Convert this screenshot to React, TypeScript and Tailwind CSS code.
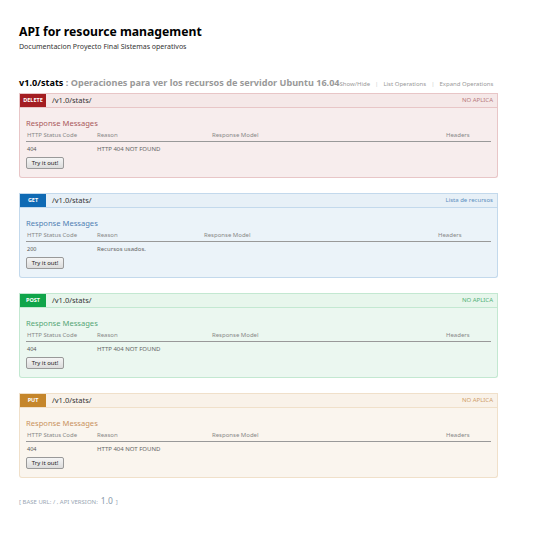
import React from "react";

type Op = {
  method: string;
  badge: string;
  head: string;
  content: string;
  h4: string;
  opt: string;
  summary: string;
  code: string;
  reason: string;
  reasonW: string;
  modelW: string;
};

const ops: Op[] = [
  {
    method: "DELETE",
    badge: "bg-[#a41e22]",
    head: "bg-[#f5e8e8] border-[#e8c6c7]",
    content: "bg-[#f7eded] border-[#e8c6c7]",
    h4: "text-[#a9595b]",
    opt: "text-[#b77a7c]",
    summary: "NO APLICA",
    code: "404",
    reason: "HTTP 404 NOT FOUND",
    reasonW: "w-[115px]",
    modelW: "w-[234px]",
  },
  {
    method: "GET",
    badge: "bg-[#0f6ab4]",
    head: "bg-[#e7f0f7] border-[#c3d9ec]",
    content: "bg-[#ebf3f9] border-[#c3d9ec]",
    h4: "text-[#5080b3]",
    opt: "text-[#5d8fc0]",
    summary: "Lista de recursos",
    code: "200",
    reason: "Recursos usados.",
    reasonW: "w-[107px]",
    modelW: "w-[234px]",
  },
  {
    method: "POST",
    badge: "bg-[#10a54a]",
    head: "bg-[#e7f6ec] border-[#c3e8d1]",
    content: "bg-[#ebf7f0] border-[#c3e8d1]",
    h4: "text-[#55a676]",
    opt: "text-[#52b076]",
    summary: "NO APLICA",
    code: "404",
    reason: "HTTP 404 NOT FOUND",
    reasonW: "w-[115px]",
    modelW: "w-[234px]",
  },
  {
    method: "PUT",
    badge: "bg-[#c5862b]",
    head: "bg-[#f9f2e9] border-[#f0e0ca]",
    content: "bg-[#faf5ee] border-[#f0e0ca]",
    h4: "text-[#c99260]",
    opt: "text-[#cf9e6a]",
    summary: "NO APLICA",
    code: "404",
    reason: "HTTP 404 NOT FOUND",
    reasonW: "w-[115px]",
    modelW: "w-[234px]",
  },
];

function Operation({ op }: { op: Op }) {
  return (
    <div className="w-[479px] flex flex-col rounded-[2px]">
      {/* heading */}
      <div className={`h-[15px] flex items-center justify-between border ${op.head}`}>
        <div className="flex items-center h-full">
          <span
            className={`${op.badge} h-full min-w-[26px] px-[2px] flex items-center justify-center text-white font-bold text-[5.5px]`}
          >
            {op.method}
          </span>
          <span className="ml-[6px] text-[7.5px] text-[#333]">/v1.0/stats/</span>
        </div>
        <span className={`pr-[4px] text-[6px] ${op.opt}`}>{op.summary}</span>
      </div>

      {/* content */}
      <div className={`border border-t-0 rounded-b-[3px] px-[6px] pt-[9px] pb-[8px] ${op.content}`}>
        <h4 className={`text-[7.6px] leading-[13px] ${op.h4}`}>Response Messages</h4>
        <div className="flex text-[6px] text-[#888] leading-[10px] pb-[1px] border-b border-[#999]">
          <span className="w-[71px] pl-[1px]">HTTP Status Code</span>
          <span className={op.reasonW}>Reason</span>
          <span className={op.modelW}>Response Model</span>
          <span>Headers</span>
        </div>
        <div className="flex text-[6px] text-[#666] leading-[10px] pt-[2px]">
          <span className="w-[71px] pl-[1px] text-[5.5px] text-[#555]">{op.code}</span>
          <span className={op.reasonW}>{op.reason}</span>
        </div>
        <button className="mt-[3px] h-[12px] w-[38px] flex items-center justify-center border border-[#999] rounded-[2px] bg-gradient-to-b from-[#f5f5f5] to-[#dcdcdc] text-[6px] text-[#222]">
          Try it out!
        </button>
      </div>
    </div>
  );
}

export default function App() {
  return (
    <div
      className="w-[533px] h-[539px] bg-white pl-[19px] pt-[23px]"
      style={{ fontFamily: '"Noto Sans", "Open Sans", sans-serif' }}
    >
      <h1 className="text-[12.2px] font-bold text-[#000] leading-[18px]">API for resource management</h1>
      <p className="text-[7px] text-[#333] leading-[10px] mt-[1px]">
        Documentacion Proyecto Final Sistemas operativos
      </p>

      <div className="mt-[24px] h-[13px] flex items-baseline w-[479px] whitespace-nowrap leading-[13px]">
        <span className="text-[9.1px] font-bold text-[#000]">v1.0/stats</span>
        <span className="text-[9.1px] font-bold text-[#999]">&nbsp;: Operaciones para ver los recursos de servidor Ubuntu 16.04</span>
        <span className="text-[6px] text-[#999]">Show/Hide</span>
        <span className="text-[6px] text-[#ccc] mx-[5px]">|</span>
        <span className="text-[6px] text-[#999]">List Operations</span>
        <span className="text-[6px] text-[#ccc] mx-[5px]">|</span>
        <span className="text-[6px] text-[#999]">Expand Operations</span>
      </div>

      <div className="mt-[4px] flex flex-col gap-[15px]">
        {ops.map((op) => (
          <Operation key={op.method} op={op} />
        ))}
      </div>

      <div className="mt-[17px] text-[6px] text-[#9aa7b4] flex items-baseline gap-[3px]">
        <span>[ BASE URL: / , API VERSION:</span>
        <span className="text-[8.5px] text-[#8a9aab]">1.0</span>
        <span>]</span>
      </div>
    </div>
  );
}
